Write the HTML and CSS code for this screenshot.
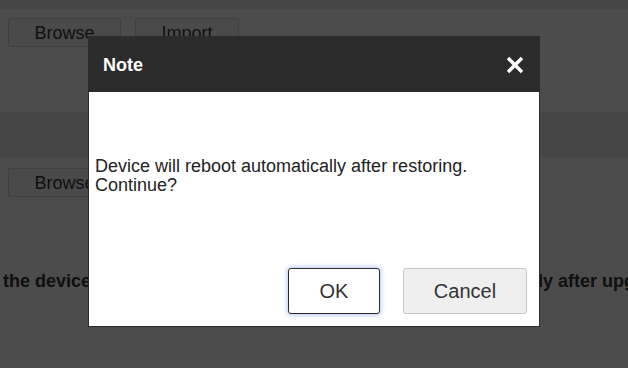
FILE: index.html
```html
<!DOCTYPE html>
<html lang="en">
<head>
<meta charset="utf-8">
<title>Restore</title>
<link rel="stylesheet" href="styles.css">
</head>
<body>
<div class="page">
  <div class="topbar"></div>
  <div class="row row-first">
    <button class="btn btn-browse">Browse</button>
    <button class="btn btn-import">Import</button>
  </div>
  <div class="band"></div>
  <div class="row row-second">
    <button class="btn btn-browse">Browse</button>
  </div>
  <p class="notice">the device during upgrading the device will reboot automatically after upgrading.</p>
</div>
<div class="overlay"></div>
<div class="dialog">
  <div class="dialog-header">
    <span class="dialog-title">Note</span>
    <button class="close" aria-label="Close">
      <svg width="18" height="18" viewBox="0 0 18 18"><path d="M2 2L16 16M16 2L2 16" stroke="#fff" stroke-width="3.4" fill="none"/></svg>
    </button>
  </div>
  <div class="dialog-body">
    <p class="message">Device will reboot automatically after restoring.<br>Continue?</p>
    <div class="actions">
      <button class="btn-ok">OK</button>
      <button class="btn-cancel">Cancel</button>
    </div>
  </div>
</div>
</body>
</html>
```
FILE: styles.css
```css
html, body {
  margin: 0;
  padding: 0;
}
body {
  width: 628px;
  height: 368px;
  overflow: hidden;
  background: #ffffff;
  font-family: "Liberation Sans", Arial, sans-serif;
  color: #333;
}
.page {
  display: flex;
  flex-direction: column;
  overflow: hidden;
}
.topbar {
  height: 9px;
  background: #eaeaea;
}
.row {
  display: flex;
  gap: 14px;
  padding-left: 8px;
}
.row-first {
  padding-top: 9px;
}
.row-second {
  padding-top: 10px;
}
.btn {
  height: 29px;
  box-sizing: border-box;
  border: 1px solid #d8d8d8;
  border-radius: 2px;
  background: #f7f7f7;
  font-family: "Liberation Sans", Arial, sans-serif;
  font-size: 18px;
  color: #333;
  padding: 0;
  line-height: 1;
}
.btn-browse { width: 113px; }
.btn-import { width: 104px; }
.band {
  margin-top: 65px;
  height: 46px;
  background: #ececec;
}
.notice {
  margin: 73px 0 0;
  padding-left: 3px;
  font-size: 18px;
  line-height: 22px;
  font-weight: bold;
  white-space: nowrap;
  overflow: hidden;
  color: #333;
}
.overlay {
  position: fixed;
  inset: 0;
  background: rgba(0, 0, 0, 0.7);
}
.dialog {
  position: fixed;
  top: 36px;
  left: 88px;
  width: 452px;
  height: 291px;
  box-sizing: border-box;
  border: 1px solid #2d2d2d;
  background: #fff;
  display: flex;
  flex-direction: column;
}
.dialog-header {
  height: 55px;
  background: #2b2b2b;
  display: flex;
  align-items: center;
  justify-content: space-between;
  padding: 0 15px 0 14px;
}
.dialog-title {
  color: #fff;
  font-size: 18px;
  font-weight: bold;
  padding-top: 2px;
}
.close {
  border: 0;
  background: none;
  padding: 0;
  width: 18px;
  height: 18px;
  display: flex;
}
.dialog-body {
  flex: 1;
  display: flex;
  flex-direction: column;
  padding: 65px 12px 12px 6px;
}
.message {
  margin: 0;
  font-size: 18px;
  line-height: 19px;
  color: #222;
}
.actions {
  margin-top: auto;
  display: flex;
  justify-content: flex-end;
  gap: 23px;
}
.btn-ok, .btn-cancel {
  height: 46px;
  box-sizing: border-box;
  border-radius: 3px;
  font-family: "Liberation Sans", Arial, sans-serif;
  font-size: 20px;
  color: #333;
  padding: 0;
}
.btn-ok {
  width: 92px;
  background: #fff;
  border: 1.5px solid #2a2a2a;
  box-shadow: 0 0 4px 1px rgba(90, 130, 230, 0.45);
}
.btn-cancel {
  width: 124px;
  background: #efefef;
  border: 1px solid #c6c6c6;
}
```
